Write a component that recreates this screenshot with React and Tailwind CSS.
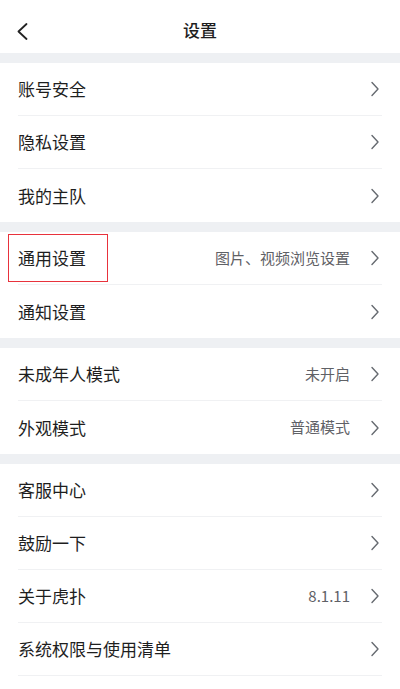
import React from 'react';

const sections = [
  [
    { label: '账号安全' },
    { label: '隐私设置' },
    { label: '我的主队' },
  ],
  [
    { label: '通用设置', value: '图片、视频浏览设置', marked: true },
    { label: '通知设置' },
  ],
  [
    { label: '未成年人模式', value: '未开启' },
    { label: '外观模式', value: '普通模式' },
  ],
  [
    { label: '客服中心' },
    { label: '鼓励一下' },
    { label: '关于虎扑', value: '8.1.11' },
    { label: '系统权限与使用清单' },
  ],
];

const Chevron = () => (
  <svg width="8" height="16" viewBox="0 0 8 16" fill="none" className="shrink-0">
    <path d="M1 1.5L7 8L1 14.5" stroke="#666a70" strokeWidth="1.4" strokeLinecap="round" strokeLinejoin="round" />
  </svg>
);

const Row = ({ item, last }) => (
  <div className="relative px-[18px]">
    {item.marked && (
      <div className="absolute left-[8px] top-[2px] w-[100px] h-[48px] border border-[#e8323c]" />
    )}
    <div className={`flex items-center h-[53px] ${last ? '' : 'border-b border-[#f0f1f3]'}`}>
      <span className="flex-1 text-[17px] text-[#1e1e1e]">{item.label}</span>
      {item.value && (
        <span className="text-[15px] text-[#5f6166] mr-[21px]">{item.value}</span>
      )}
      <div className="mr-[3px]">
        <Chevron />
      </div>
    </div>
  </div>
);

const App = () => {
  return (
    <div
      className="w-[400px] h-[689px] overflow-hidden bg-white"
      style={{ fontFamily: '"Noto Sans CJK SC", "Noto Sans", sans-serif' }}
    >
      {/* Header */}
      <div className="relative flex items-center justify-center h-[53px]">
        <div className="absolute left-[17px] top-[23px]">
          <svg width="11" height="17" viewBox="0 0 11 17" fill="none">
            <path d="M9.5 1L1.5 8.5L9.5 16" stroke="#222" strokeWidth="1.8" strokeLinecap="round" strokeLinejoin="round" />
          </svg>
        </div>
        <span className="text-[17px] font-medium text-[#1e1e1e] mt-[6px]">设置</span>
      </div>

      {sections.map((section, si) => (
        <div key={si}>
          <div className="h-[10px] bg-[#eef0f3]" />
          {section.map((item, i) => (
            <Row key={item.label} item={item} last={si !== sections.length - 1 && i === section.length - 1} />
          ))}
        </div>
      ))}
    </div>
  );
};

export default App;
